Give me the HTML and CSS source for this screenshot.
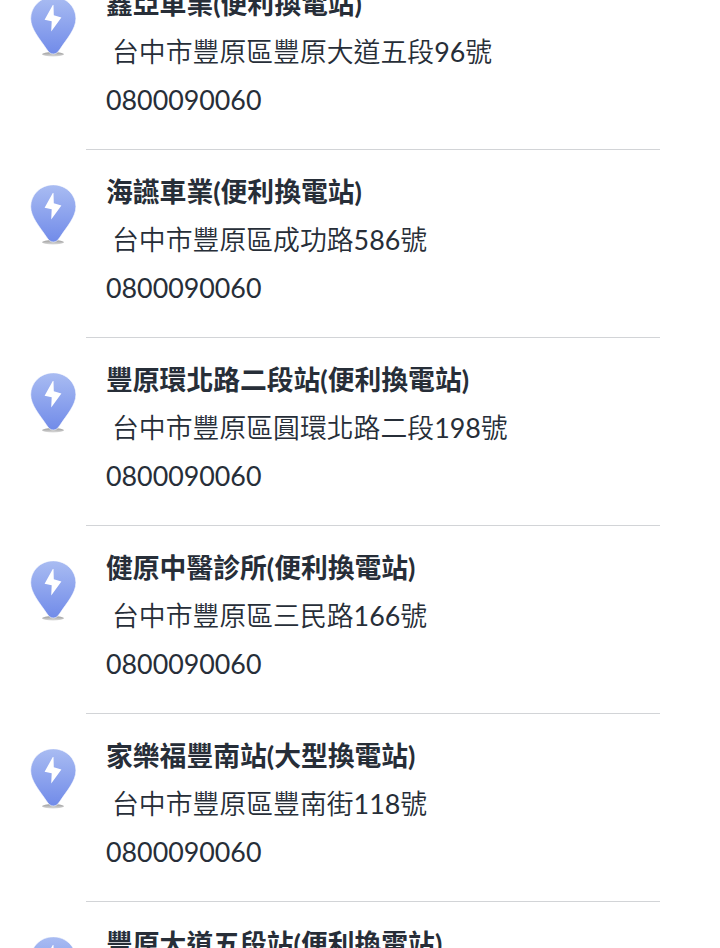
FILE: index.html
```html
<!DOCTYPE html>
<html lang="zh-Hant">
  <head>
    <meta charset="UTF-8" />
    <title>換電站</title>
    <link rel="stylesheet" href="styles.css">
  </head>
  <body>
    <svg class="defs" width="0" height="0">
      <defs>
        <linearGradient id="pin-fill" x1="0" y1="0" x2="0" y2="1">
          <stop offset="0" stop-color="#a9bcf2" />
          <stop offset="1" stop-color="#718be9" />
        </linearGradient>
        <linearGradient id="pin-shadow" x1="0" y1="0" x2="0" y2="1">
          <stop offset="0" stop-color="#999" />
          <stop offset="1" stop-color="#ddd" />
        </linearGradient>
      </defs>
      <symbol id="pin" viewBox="0 0 48 62">
        <ellipse cx="24" cy="57.300" rx="11" ry="2.200" fill="url(#pin-shadow)" />
        <path fill="url(#pin-fill)" stroke="#fff" stroke-width="0.600" d="M24.300 -0.200C11.700 -0.200 1.700 9.500 1.700 21.500C1.700 32 10.500 41.500 17.500 52C19.800 55.500 21.500 57 24.300 57C27.100 57 28.800 55.500 31.100 52C38 41.500 46.900 32 46.900 21.500C46.900 9.500 36.900 -0.200 24.300 -0.200Z" />
        <path fill="#fff" d="M23.800 8L15.600 22.800L22.700 24.200L22.200 34.500L32.400 20.600L24.800 18.300L24.500 8Z" />
      </symbol>
    </svg>

    <ul class="station-list">
      <li class="station">
        <svg class="pin"><use href="#pin" /></svg>
        <div class="info">
          <h3>鑫亞車業(便利換電站)</h3>
          <p class="address">台中市豐原區豐原大道五段96號</p>
          <p>0800090060</p>
        </div>
      </li>
      <li class="station">
        <svg class="pin"><use href="#pin" /></svg>
        <div class="info">
          <h3>海讌車業(便利換電站)</h3>
          <p class="address">台中市豐原區成功路586號</p>
          <p>0800090060</p>
        </div>
      </li>
      <li class="station">
        <svg class="pin"><use href="#pin" /></svg>
        <div class="info">
          <h3>豐原環北路二段站(便利換電站)</h3>
          <p class="address">台中市豐原區圓環北路二段198號</p>
          <p>0800090060</p>
        </div>
      </li>
      <li class="station">
        <svg class="pin"><use href="#pin" /></svg>
        <div class="info">
          <h3>健原中醫診所(便利換電站)</h3>
          <p class="address">台中市豐原區三民路166號</p>
          <p>0800090060</p>
        </div>
      </li>
      <li class="station">
        <svg class="pin"><use href="#pin" /></svg>
        <div class="info">
          <h3>家樂福豐南站(大型換電站)</h3>
          <p class="address">台中市豐原區豐南街118號</p>
          <p>0800090060</p>
        </div>
      </li>
      <li class="station">
        <svg class="pin"><use href="#pin" /></svg>
        <div class="info">
          <h3>豐原大道五段站(便利換電站)</h3>
        </div>
      </li>
    </ul>
  </body>
</html>
```

FILE: styles.css
```css
html {
  overflow: hidden;
}
body {
  margin: 0;
  height: 948px;
  overflow: hidden;
  background: #fff;
  color: #272e38;
  font-family: Lato, "Noto Sans CJK TC DemiLight", "Noto Sans CJK TC", sans-serif;
}
.defs {
  display: block;
}
.station-list {
  list-style: none;
  margin: -38px 0 0;
  padding: 0 60px 0 29px;
}
.station {
  display: flex;
  height: 188px;
}
.station:last-child {
  height: 46px;
  overflow: hidden;
}
.station:last-child .info {
  border-bottom: none;
}
.pin {
  flex: none;
  width: 48px;
  height: 62px;
  margin: 35px 9px 0 0;
  overflow: visible;
}
.info {
  flex: 1;
  box-sizing: border-box;
  padding: 18px 0 0 20px;
  border-bottom: 1px solid #d2d4d7;
}
.info h3,
.info p {
  margin: 0;
  font-size: 26.8px;
  line-height: 48px;
  white-space: nowrap;
}
.info h3 {
  font-family: Lato, "Noto Sans CJK TC", sans-serif;
}
.info .address {
  padding-left: 6px;
  font-size: 26.85px;
}
```
